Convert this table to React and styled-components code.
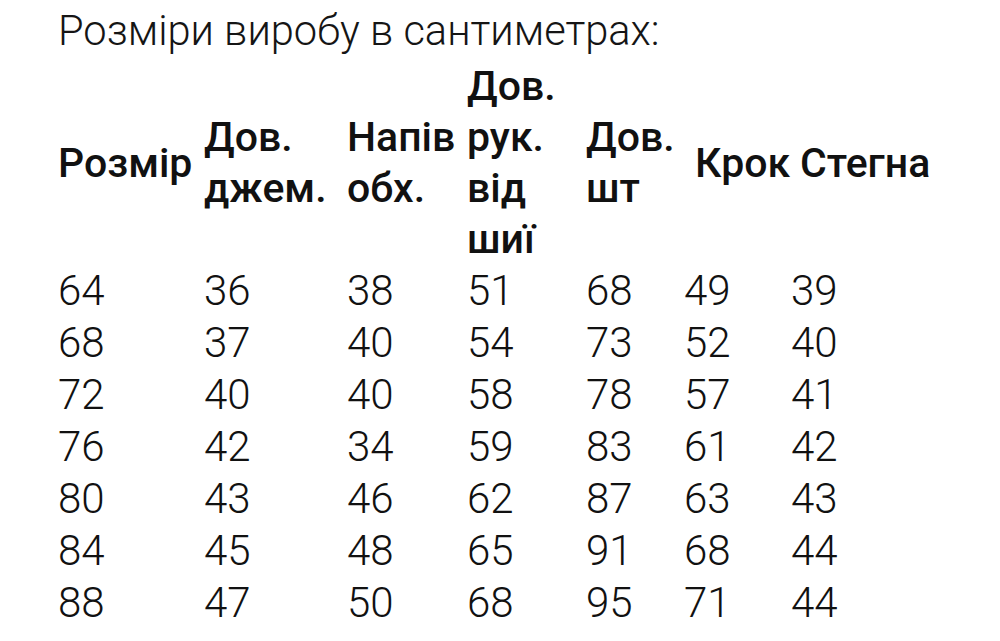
import styled, { createGlobalStyle } from "styled-components";

const GlobalStyle = createGlobalStyle`
  body {
    margin: 0;
    background: #fff;
    font-family: Roboto, "Noto Sans", sans-serif;
    color: #111;
  }
`;

const headers = [
  { lines: ["Розмір"] },
  { lines: ["Дов.", "джем."] },
  { lines: ["Напів", "обх."] },
  { lines: ["Дов.", "рук.", "від", "шиї"] },
  { lines: ["Дов.", "шт"] },
  { lines: ["Крок"], shift: 11 },
  { lines: ["Стегна"], shift: 9 },
];

const rows = [
  [64, 36, 38, 51, 68, 49, 39],
  [68, 37, 40, 54, 73, 52, 40],
  [72, 40, 40, 58, 78, 57, 41],
  [76, 42, 34, 59, 83, 61, 42],
  [80, 43, 46, 62, 87, 63, 43],
  [84, 45, 48, 65, 91, 68, 44],
  [88, 47, 50, 68, 95, 71, 44],
];

const Page = styled.div`
  padding-left: 58px;
`;

const Title = styled.h2`
  margin: 0;
  font-size: 41.6px;
  font-weight: 300;
  line-height: 61px;
  color: #151515;
  white-space: nowrap;
`;

const Table = styled.div`
  display: grid;
  grid-template-columns: 146px 143px 120px 119px 98px 107px auto;
`;

const HeadCell = styled.div`
  align-self: center;
  padding-left: ${(p) => p.$shift || 0}px;
  font-size: 41px;
  font-weight: 500;
  line-height: 51px;
  color: #111;
  white-space: nowrap;
`;

const Line = styled.div``;

const Cell = styled.div`
  font-size: 42px;
  font-weight: 300;
  line-height: 52px;
  color: #111;
`;

export default function App() {
  return (
    <>
      <GlobalStyle />
      <Page>
        <Title>Розміри виробу в сантиметрах:</Title>
        <Table>
          {headers.map((h, i) => (
            <HeadCell key={"h" + i} $shift={h.shift}>
              {h.lines.map((l) => (
                <Line key={l}>{l}</Line>
              ))}
            </HeadCell>
          ))}
          {rows.map((r, ri) =>
            r.map((v, ci) => <Cell key={ri + "-" + ci}>{v}</Cell>)
          )}
        </Table>
      </Page>
    </>
  );
}
